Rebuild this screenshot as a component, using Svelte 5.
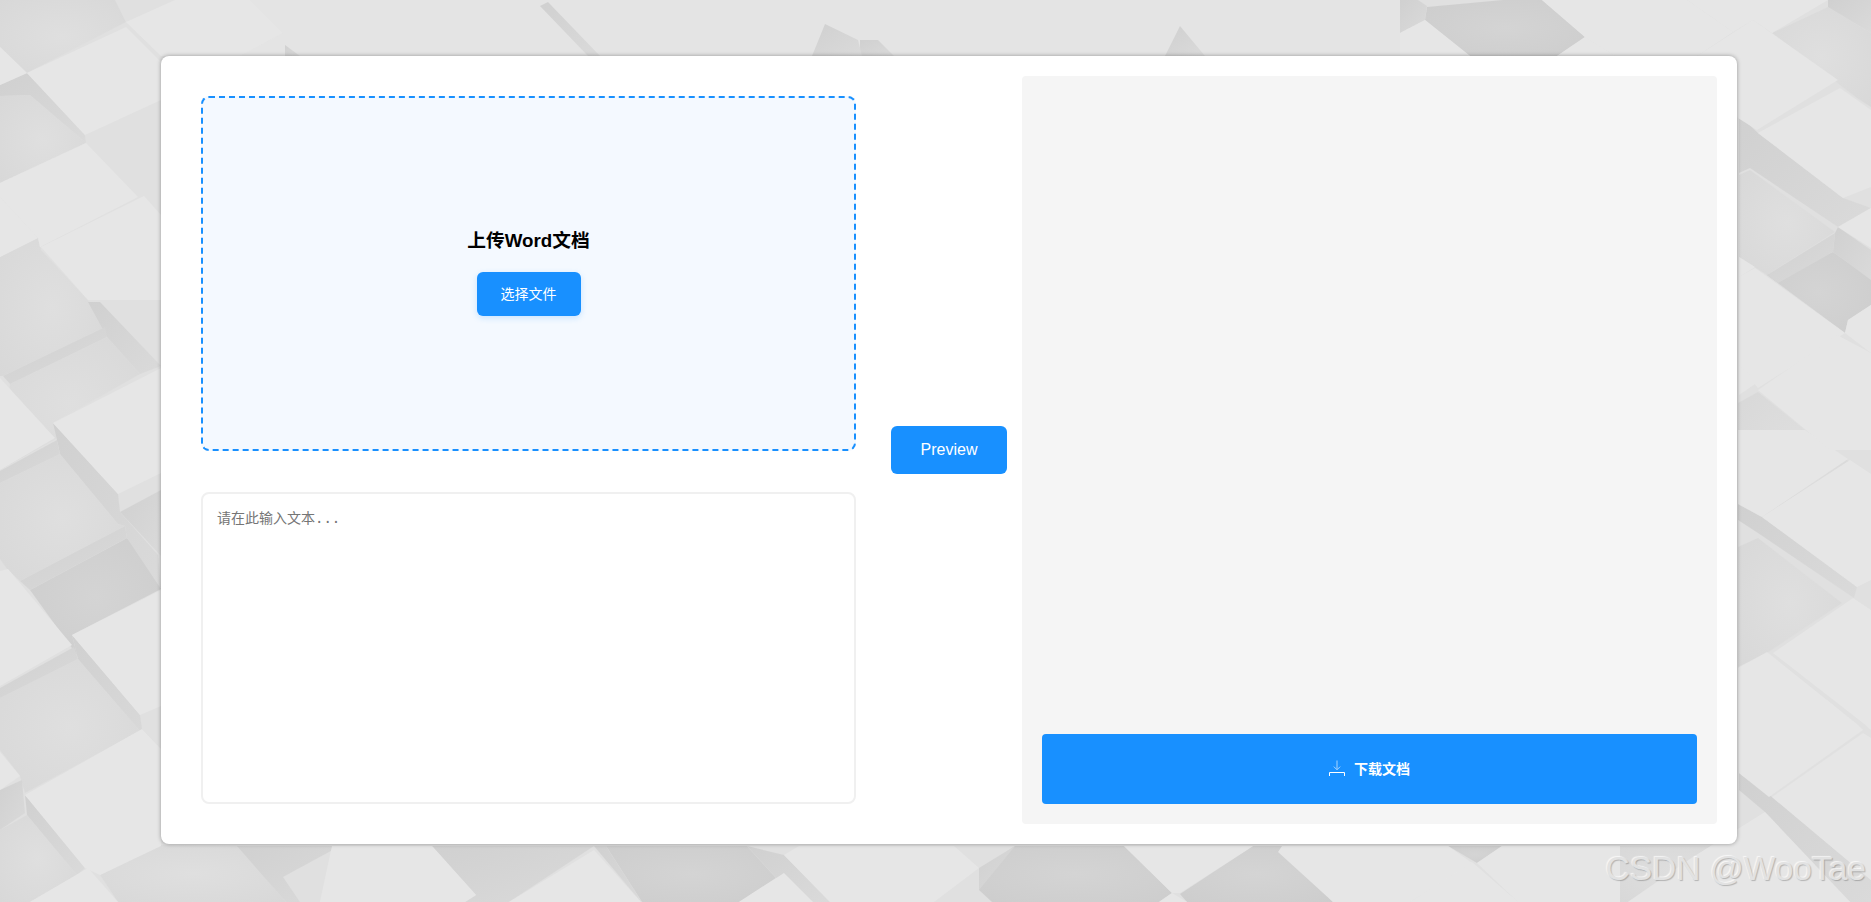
<script>
  // isometric block backdrop, traced by hand: one list of polygons per tone
  const blocks = {
    wash: [
      "250,0 1400,0 1400,56 240,56 283,33"
    ],
    floor: [
      "0,0 115,0 126,22 27,73 0,47",
      "0,96 30,95 86,143 0,183",
      "0,257 38,238 41,250 88,300 105,327 3,376 0,376",
      "10,384 107,337 140,374 53,423 57,438 0,470",
      "0,483 60,454 118,524 125,526 20,581 7,569 0,559",
      "0,698 78,659 140,731 25,793 20,776 0,750",
      "0,830 27,815 77,875 30,902 0,902",
      "100,875 161,845 239,846 286,902 118,902",
      "1620,846 1739,846 1693,857 1628,902 1620,902",
      "1758,392 1830,450 1850,462 1762,517 1738,504 1738,403",
      "1772,33 1828,7 1871,33 1871,107 1857,98",
      "1738,547 1758,538 1842,603 1767,653 1738,667",
      "1739,175 1750,170 1835,232 1767,275 1739,257"
    ],
    deep: [
      "30,590 127,538 158,573 161,589 72,635 77,655",
      "606,846 747,846 776,878 739,902 642,902",
      "1015,846 1124,846 1172,893 1159,902 992,902 979,890 979,871",
      "1253,846 1282,846 1333,902 1187,902 1180,894",
      "1448,846 1502,846 1477,863",
      "1427,7 1503,0 1542,0 1585,37 1557,56 1470,56 1425,20",
      "1767,275 1833,252 1871,278 1871,305 1848,320 1845,333"
    ],
    side: [
      "27,73 85,135 86,143 30,95 0,96 0,85",
      "53,423 118,494 120,512 158,555 161,589 127,538 125,526 118,524 60,454 57,440",
      "120,512 161,490 161,556",
      "100,302 161,366 140,374 107,337 88,302",
      "72,635 140,715 142,729 161,749 140,731 78,659",
      "25,795 85,868 77,875 27,815",
      "1739,115 1758,133 1843,198 1871,208 1838,227 1750,168 1739,173",
      "1762,517 1857,587 1854,598 1758,533 1738,520 1738,504",
      "1739,773 1772,797 1871,880 1871,902 1850,902 1765,812 1739,790",
      "747,846 784,855 830,902 813,902 776,878",
      "432,846 594,846 509,902 465,902 476,895",
      "979,868 1015,846 979,890",
      "237,846 340,846 283,877 300,902 286,902",
      "3,376 105,327 107,337 10,384",
      "0,471 57,440 60,454 0,483",
      "20,581 125,526 127,538 30,590",
      "0,688 74,647 78,659 0,698",
      "0,790 22,780 25,813 0,830",
      "1767,275 1835,233 1833,252 1778,283",
      "1835,233 1838,227 1871,250 1871,280 1833,252",
      "1400,0 1418,0 1427,6 1425,20 1400,33",
      "1828,0 1871,0 1871,33 1828,7",
      "285,45 300,56 285,56",
      "860,40 878,40 894,56 860,56",
      "540,6 548,2 600,56 588,56",
      "825,24 858,40 862,56 812,56",
      "1180,26 1205,56 1165,56",
      "594,846 606,846 642,902 641,902"
    ],
    top: [
      "27,73 126,27 161,62 161,100 85,135",
      "126,22 175,0 250,0 283,33 240,56 161,56",
      "0,47 27,73 0,85",
      "0,183 86,143 138,197 40,247 38,238 0,197",
      "41,247 144,196 161,215 161,300 88,300",
      "0,197 38,238 0,257",
      "0,378 55,438 0,470",
      "53,423 161,368 161,473 118,494",
      "0,571 8,569 72,645 0,686",
      "72,635 161,590 161,706 140,715",
      "25,795 142,729 161,749 161,846 100,875 85,868",
      "0,752 20,776 0,790",
      "30,902 88,868 118,902",
      "320,902 332,846 432,846 476,895 465,902",
      "509,902 594,850 641,902",
      "799,846 954,846 979,868 934,902 830,902 784,855",
      "739,902 784,873 813,902",
      "1124,846 1253,846 1180,893 1172,893",
      "1159,902 1172,893 1187,902",
      "1282,846 1448,846 1472,863 1410,902 1333,902 1278,852",
      "1472,862 1518,902 1410,902",
      "1502,846 1620,846 1620,902 1518,902 1477,863",
      "1739,700 1827,700 1863,730 1769,797 1739,773",
      "1863,733 1871,738 1871,880 1772,797",
      "1693,857 1765,812 1850,902 1628,902",
      "1738,430 1805,430 1848,459 1762,517 1738,504",
      "1762,517 1850,460 1871,474 1871,580 1857,587",
      "1773,653 1853,598 1871,610 1871,730 1863,723",
      "1738,668 1767,652 1858,725 1863,730 1738,730",
      "1425,20 1470,56 1400,56 1400,33",
      "1542,0 1687,0 1733,32 1697,56 1615,56 1585,37",
      "1585,37 1615,56 1557,56",
      "1697,56 1753,20 1838,80 1757,130 1738,118",
      "1687,0 1828,0 1772,33 1753,20 1733,32",
      "1758,133 1840,88 1871,110 1871,187 1843,198",
      "1838,227 1871,208 1871,248",
      "1739,277 1755,268 1845,333 1758,388 1739,365",
      "1758,390 1837,335 1871,353 1871,450 1830,450",
      "1848,320 1871,305 1871,353 1845,333",
      "1739,257 1755,267 1739,277",
      "1739,365 1758,382 1739,395"
    ]
  };
</script>

<div class="backdrop">
  <svg viewBox="0 0 1871 902" width="1871" height="902" aria-hidden="true">
    <defs>
      <radialGradient id="floorTone" r="0.7">
        <stop offset="0" stop-color="#dfdfdf" />
        <stop offset="1" stop-color="#d8d8d8" />
      </radialGradient>
      <radialGradient id="deepTone" r="0.7">
        <stop offset="0" stop-color="#d4d4d4" />
        <stop offset="1" stop-color="#cdcdcd" />
      </radialGradient>
      <linearGradient id="sideTone" x1="0" y1="0" x2="1" y2="1">
        <stop offset="0" stop-color="#d0d0d0" />
        <stop offset="1" stop-color="#dadada" />
      </linearGradient>
    </defs>
    {#each Object.entries(blocks) as [tone, shapes]}
      {#each shapes as points}
        <polygon class={tone} {points} />
      {/each}
    {/each}
  </svg>
</div>

<div class="page">
  <main class="card">
    <section class="inputs">
      <div class="upload">
        <h3>上传Word文档</h3>
        <button class="pick">选择文件</button>
      </div>
      <textarea placeholder="请在此输入文本..."></textarea>
    </section>

    <div class="middle">
      <button class="preview">Preview</button>
    </div>

    <section class="output">
      <button class="download">
        <svg width="16" height="16" viewBox="0 0 16 16" fill="none" aria-hidden="true">
          <path class="arrow" d="M8 .5v9M4.8 6.6 8 9.8l3.2-3.2" />
          <path class="tray" d="M.5 16v-3.5h15V16" />
        </svg>
        下载文档
      </button>
    </section>
  </main>
</div>

<span class="watermark">CSDN @WooTae</span>

<style>
  :global(body) {
    background: #e0e0e0;
    overflow: hidden;
  }

  .backdrop {
    position: absolute;
    inset: 0;
    overflow: hidden;
  }

  .backdrop svg {
    display: block;
    filter: blur(0.4px);
  }

  .wash { fill: #e4e4e4; }
  .floor { fill: url(#floorTone); }
  .deep { fill: url(#deepTone); }
  .side { fill: url(#sideTone); }
  .top { fill: #e6e6e6; }

  .page {
    position: relative;
    box-sizing: border-box;
    height: 902px;
    padding: 56px 134px 58px 161px;
    display: flex;
    font-family: "Liberation Sans", "Noto Sans CJK SC", sans-serif;
  }

  .card {
    flex: 1;
    display: flex;
    box-sizing: border-box;
    padding: 20px;
    background: #fff;
    border-radius: 8px;
    box-shadow: 0 0 4px rgba(0, 0, 0, 0.35);
  }

  .inputs {
    width: 655px;
    padding: 20px;
    display: flex;
    flex-direction: column;
    gap: 41px;
  }

  .upload {
    box-sizing: border-box;
    height: 355px;
    display: flex;
    flex-direction: column;
    align-items: center;
    justify-content: center;
    gap: 21px;
    background: #f4f9ff;
    border: 2px dashed #1890ff;
    border-radius: 8px;
  }

  h3 {
    margin: 0;
    font-size: 18.72px;
    font-weight: 700;
    line-height: 20px;
    color: #000;
  }

  button {
    border: none;
    color: #fff;
    background: #1890ff;
    font-family: inherit;
    cursor: pointer;
  }

  .pick {
    width: 104px;
    height: 44px;
    padding: 0 0 2px;
    font-size: 14px;
    border-radius: 6px;
    box-shadow: 0 2px 6px rgba(24, 144, 255, 0.2);
  }

  textarea {
    flex: 1;
    box-sizing: border-box;
    padding: 13px 14px;
    border: 2px solid #f0f0f0;
    border-radius: 8px;
    outline: none;
    resize: none;
    font-family: "DejaVu Sans Mono", "Noto Sans CJK SC", monospace;
    font-size: 14px;
  }

  textarea::placeholder {
    color: #757575;
  }

  .middle {
    width: 146px;
    box-sizing: border-box;
    padding: 0 15px;
    display: flex;
    align-items: center;
  }

  .preview {
    width: 116px;
    height: 48px;
    font-size: 16px;
    border-radius: 6px;
  }

  .output {
    flex: 1;
    display: flex;
    flex-direction: column;
    justify-content: flex-end;
    padding: 20px;
    background: #f5f5f5;
    border-radius: 4px;
  }

  .download {
    height: 70px;
    padding: 0 0 2px;
    display: flex;
    align-items: center;
    justify-content: center;
    gap: 9px;
    font-size: 14px;
    font-weight: 700;
    border-radius: 4px;
  }

  .arrow {
    stroke: #a6d4ff;
    stroke-width: 1;
  }

  .tray {
    stroke: #fff;
    stroke-width: 1;
  }

  .watermark {
    position: absolute;
    right: 5px;
    bottom: 13px;
    font-family: "Liberation Sans", sans-serif;
    font-size: 33.5px;
    line-height: 40px;
    color: #e2e2e2;
    text-shadow: 1px 1px 1px rgba(0, 0, 0, 0.22), -1px -1px 1px rgba(255, 255, 255, 0.7);
    white-space: nowrap;
  }
</style>
